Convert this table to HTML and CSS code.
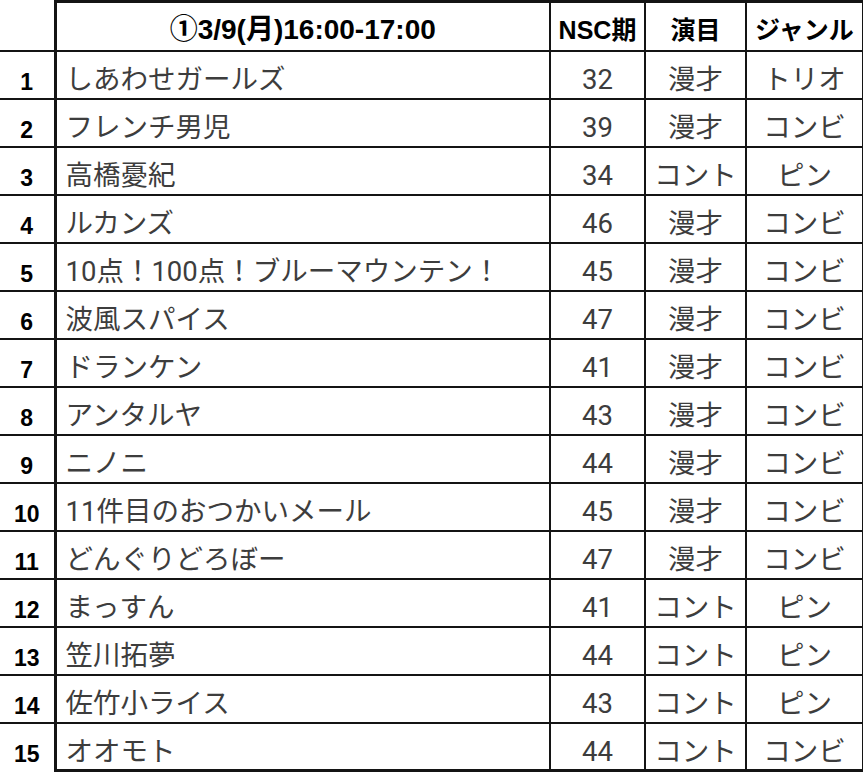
FILE: index.html
```html
<!DOCTYPE html>
<html lang="ja">
<head>
<meta charset="utf-8">
<title>ライブ出演者一覧</title>
<link rel="stylesheet" href="styles.css">
</head>
<body>
<table class="lineup">
  <colgroup>
    <col class="c-no">
    <col class="c-name">
    <col class="c-gen">
    <col class="c-act">
    <col class="c-type">
  </colgroup>
  <thead>
    <tr class="head">
      <th class="no"></th>
      <th class="name">①3/9(月)16:00-17:00</th>
      <th>NSC期</th>
      <th>演目</th>
      <th>ジャンル</th>
    </tr>
  </thead>
  <tbody>
    <tr><th class="no">1</th><td class="name">しあわせガールズ</td><td>32</td><td>漫才</td><td>トリオ</td></tr>
    <tr><th class="no">2</th><td class="name">フレンチ男児</td><td>39</td><td>漫才</td><td>コンビ</td></tr>
    <tr><th class="no">3</th><td class="name">高橋憂紀</td><td>34</td><td>コント</td><td>ピン</td></tr>
    <tr><th class="no">4</th><td class="name">ルカンズ</td><td>46</td><td>漫才</td><td>コンビ</td></tr>
    <tr><th class="no">5</th><td class="name">10点！100点！ブルーマウンテン！</td><td>45</td><td>漫才</td><td>コンビ</td></tr>
    <tr><th class="no">6</th><td class="name">波風スパイス</td><td>47</td><td>漫才</td><td>コンビ</td></tr>
    <tr><th class="no">7</th><td class="name">ドランケン</td><td>41</td><td>漫才</td><td>コンビ</td></tr>
    <tr><th class="no">8</th><td class="name">アンタルヤ</td><td>43</td><td>漫才</td><td>コンビ</td></tr>
    <tr><th class="no">9</th><td class="name">ニノニ</td><td>44</td><td>漫才</td><td>コンビ</td></tr>
    <tr><th class="no">10</th><td class="name">11件目のおつかいメール</td><td>45</td><td>漫才</td><td>コンビ</td></tr>
    <tr><th class="no">11</th><td class="name">どんぐりどろぼー</td><td>47</td><td>漫才</td><td>コンビ</td></tr>
    <tr><th class="no">12</th><td class="name">まっすん</td><td>41</td><td>コント</td><td>ピン</td></tr>
    <tr><th class="no">13</th><td class="name">笠川拓夢</td><td>44</td><td>コント</td><td>ピン</td></tr>
    <tr><th class="no">14</th><td class="name">佐竹小ライス</td><td>43</td><td>コント</td><td>ピン</td></tr>
    <tr class="last"><th class="no">15</th><td class="name">オオモト</td><td>44</td><td>コント</td><td>コンビ</td></tr>
  </tbody>
</table>
</body>
</html>
```

FILE: styles.css
```css
html, body {
  margin: 0;
  padding: 0;
  background: #ffffff;
}

.lineup {
  border-collapse: collapse;
  table-layout: fixed;
  width: 863px;
}

.c-no { width: 55px; }
.c-name { width: 495px; }
.c-gen { width: 95px; }
.c-act { width: 101px; }
.c-type { width: 117px; }

.lineup th,
.lineup td {
  border: 2px solid #141414;
  padding: 0;
  text-align: center;
  vertical-align: middle;
  white-space: nowrap;
  overflow: hidden;
  box-sizing: border-box;
}

.lineup tbody tr {
  height: 48px;
}

.lineup td {
  font-family: Roboto, "Noto Sans CJK JP", sans-serif;
  font-size: 27.5px;
  font-weight: 400;
  color: #3d3d3d;
  height: 48px;
  padding-top: 11px;
  line-height: 30px;
}

.lineup td.name {
  text-align: left;
  padding-left: 9px;
}

.head {
  height: 49px;
}

.head th {
  font-family: "Liberation Sans", "Noto Sans CJK JP", sans-serif;
  font-size: 25px;
  font-weight: 700;
  color: #000000;
  height: 49px;
  padding-top: 8px;
  line-height: 30px;
  border-top-width: 3px;
}

.head th.name {
  font-size: 28px;
}

.lineup th.no {
  font-family: "Liberation Sans", sans-serif;
  font-size: 23px;
  font-weight: 700;
  color: #000000;
  border-left: none;
  border-right-width: 3px;
  padding-top: 15px;
}

.head th.no {
  border-top: none;
}

.last td {
  border-bottom-width: 3px;
}

.last th.no {
  border-bottom: none;
}
```
